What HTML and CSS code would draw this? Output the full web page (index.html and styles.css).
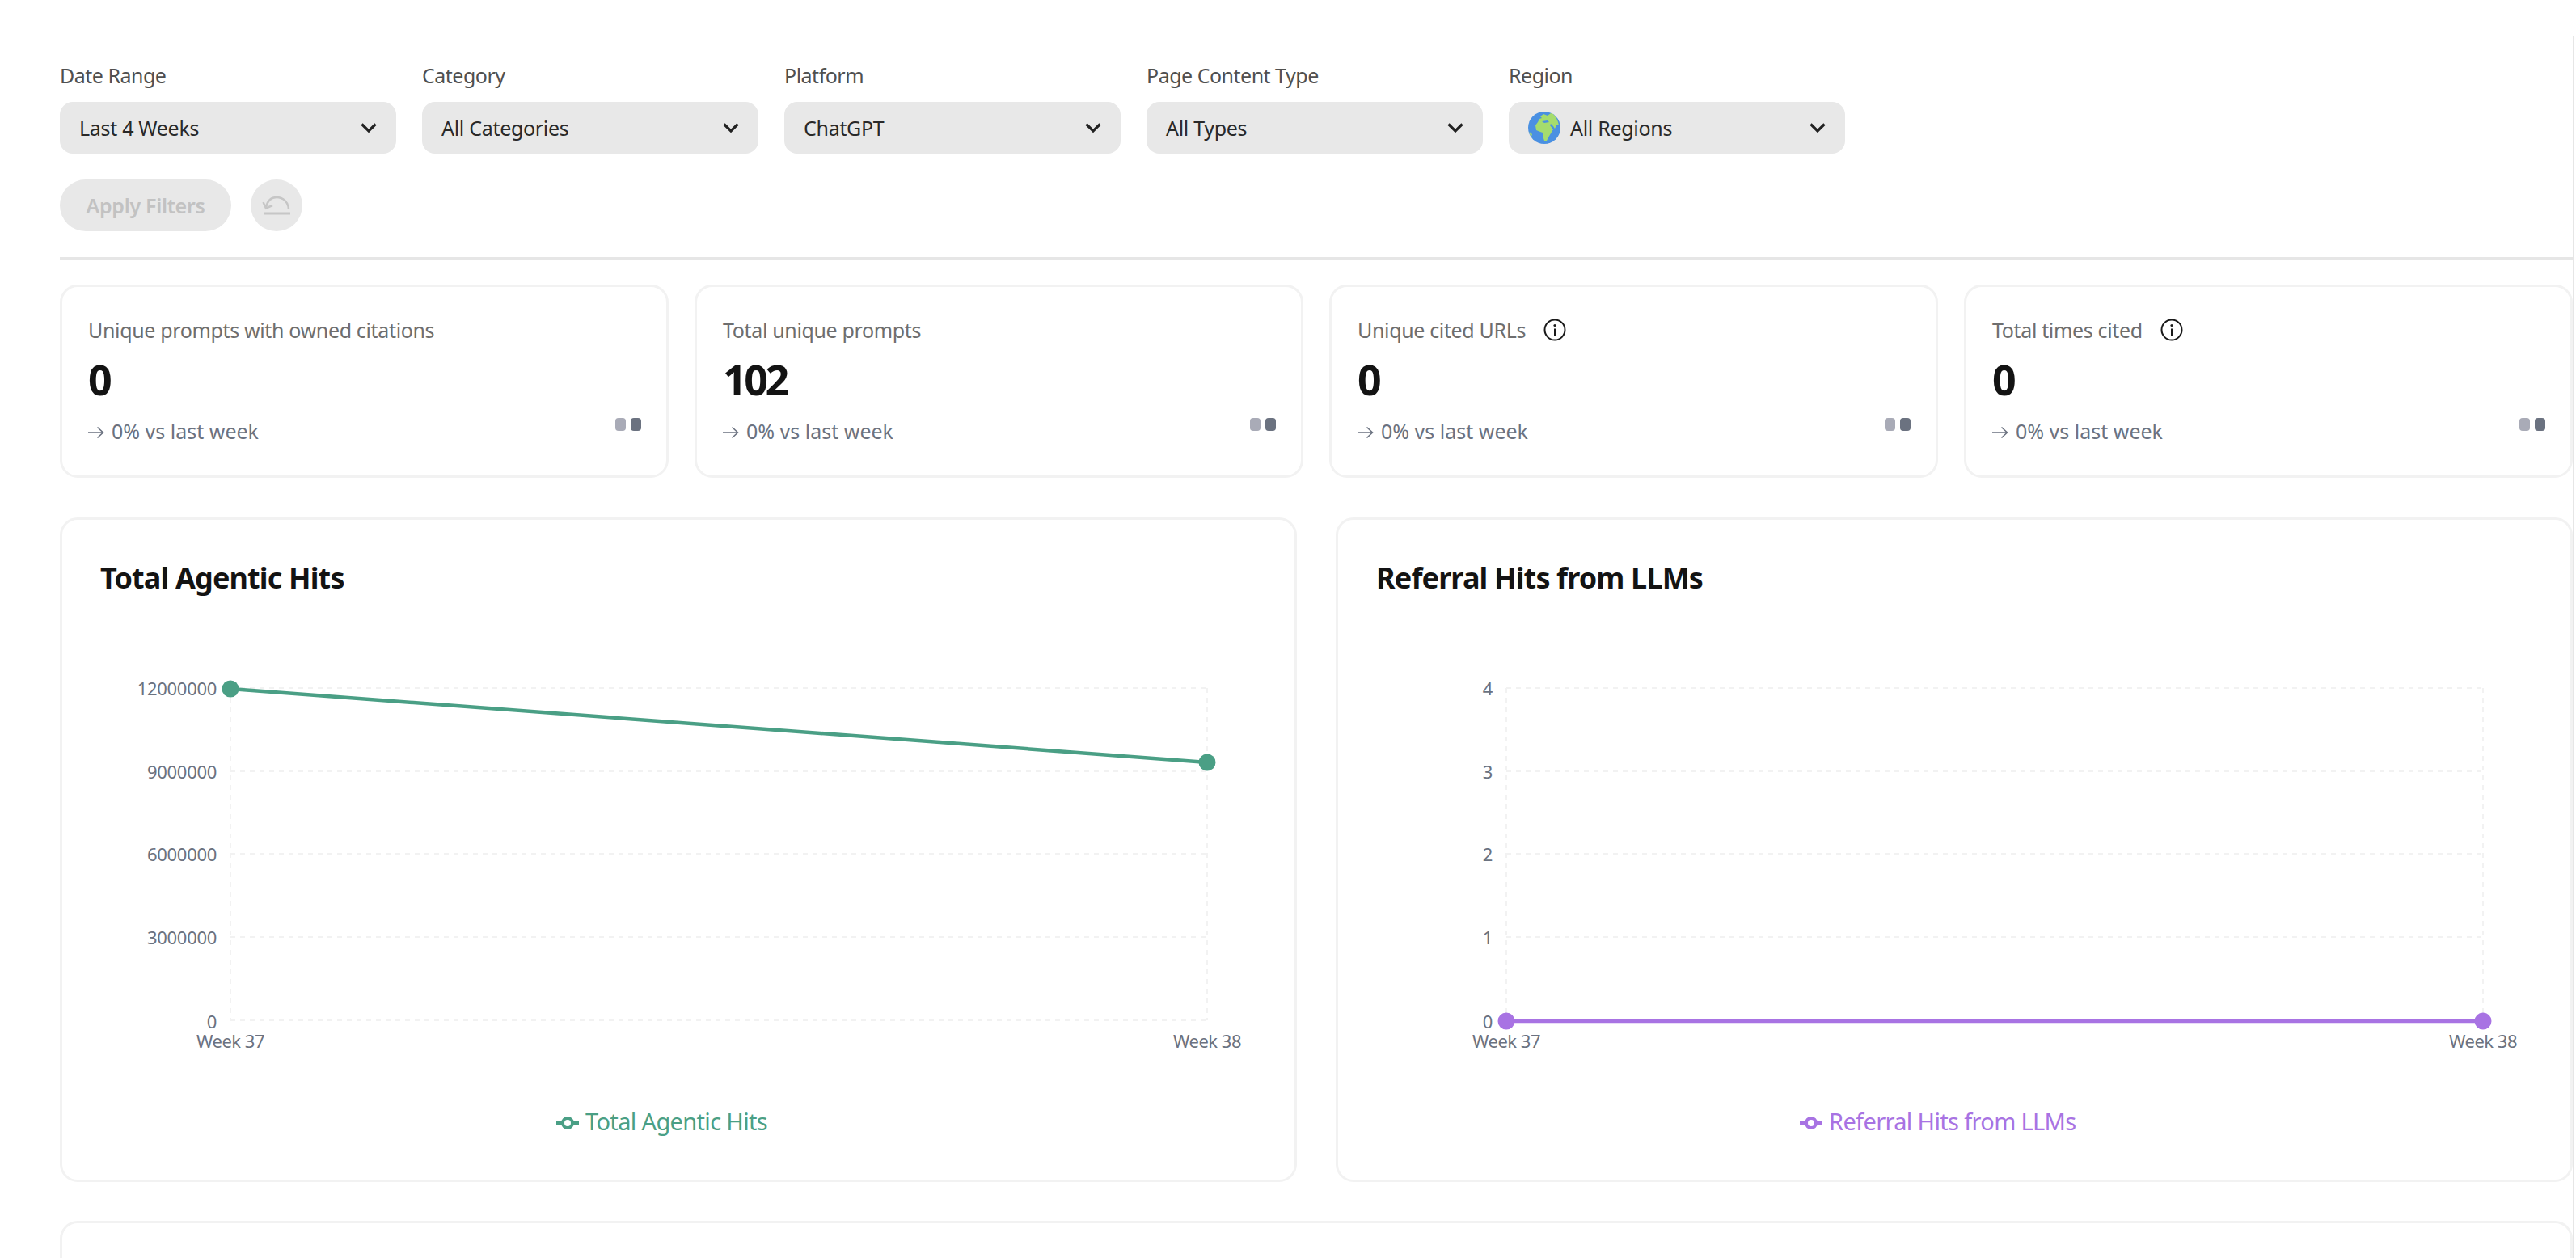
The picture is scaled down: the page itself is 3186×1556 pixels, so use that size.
FILE: index.html
```html
<!DOCTYPE html>
<html lang="en">
<head>
<meta charset="utf-8">
<title>Dashboard</title>
<link rel="stylesheet" href="styles.css">
</head>
<body>
<main class="page">
  <section class="filters">
    <div class="field"><label class="field-label">Date Range</label><div class="select"><span class="select-text">Last 4 Weeks</span><svg class="chev" viewBox="0 0 20 12"><path d="M1.5 1.5 10 10l8.5-8.5"/></svg></div></div>
    <div class="field"><label class="field-label">Category</label><div class="select"><span class="select-text">All Categories</span><svg class="chev" viewBox="0 0 20 12"><path d="M1.5 1.5 10 10l8.5-8.5"/></svg></div></div>
    <div class="field"><label class="field-label">Platform</label><div class="select"><span class="select-text">ChatGPT</span><svg class="chev" viewBox="0 0 20 12"><path d="M1.5 1.5 10 10l8.5-8.5"/></svg></div></div>
    <div class="field"><label class="field-label">Page Content Type</label><div class="select"><span class="select-text">All Types</span><svg class="chev" viewBox="0 0 20 12"><path d="M1.5 1.5 10 10l8.5-8.5"/></svg></div></div>
    <div class="field"><label class="field-label">Region</label><div class="select"><span class="select-with-icon"><svg class="globe" viewBox="0 0 40 40"><circle cx="20" cy="20" r="20" fill="#4a90e2"/><path fill="#a5dc6d" d="M12 13l2-4 3-1-2-2 4-3 5 2 4-3 3 1 4 5 2 5 1 4-3 0-2 4-2-3-3-3-1 2 4 5-3 5-3 5-2 4h-3l-2-6v-4l-3-1-5-2-1-6z"/><path fill="#4a90e2" d="M17 12l7-1 2 2-6 1z"/><path fill="#a5dc6d" d="M1.500 25l3.500 3-1 3-1.500-2z"/></svg><span class="select-text">All Regions</span></span><svg class="chev" viewBox="0 0 20 12"><path d="M1.5 1.5 10 10l8.5-8.5"/></svg></div></div>
  </section>
  <div class="actions">
    <button class="apply" disabled>Apply Filters</button>
    <button class="reset" disabled aria-label="Reset"><svg class="reset-icon" viewBox="0 0 36 26"><path class="reset-stroke" d="M33 18C33 9 26 3 18 3 12 3 7 7 5 15"/><path class="reset-stroke" d="M1.500 9l3.500 7.500 8-3.500"/><path class="reset-base" d="M3 23h32"/></svg></button>
  </div>
  <hr class="divider">
  <section class="stats">
    <article class="stat">
      <div class="stat-label">Unique prompts with owned citations</div>
      <div class="stat-value">0</div>
      <div class="stat-foot"><span class="stat-delta"><svg class="delta-arrow" viewBox="0 0 20 16"><path d="M0 8h18M11.500 1.500 18.500 8l-7 6.500"/></svg>0% vs last week</span><span class="bars"><i class="bar bar-light"></i><i class="bar bar-dark"></i></span></div>
    </article>
    <article class="stat">
      <div class="stat-label">Total unique prompts</div>
      <div class="stat-value">102</div>
      <div class="stat-foot"><span class="stat-delta"><svg class="delta-arrow" viewBox="0 0 20 16"><path d="M0 8h18M11.500 1.500 18.500 8l-7 6.500"/></svg>0% vs last week</span><span class="bars"><i class="bar bar-light"></i><i class="bar bar-dark"></i></span></div>
    </article>
    <article class="stat">
      <div class="stat-label">Unique cited URLs<svg class="info" viewBox="0 0 28 28"><circle cx="14" cy="14" r="12.500"/><path d="M14 12.500V21"/><circle class="info-dot" cx="14" cy="8.500" r="1.600"/></svg></div>
      <div class="stat-value">0</div>
      <div class="stat-foot"><span class="stat-delta"><svg class="delta-arrow" viewBox="0 0 20 16"><path d="M0 8h18M11.500 1.500 18.500 8l-7 6.500"/></svg>0% vs last week</span><span class="bars"><i class="bar bar-light"></i><i class="bar bar-dark"></i></span></div>
    </article>
    <article class="stat">
      <div class="stat-label">Total times cited<svg class="info" viewBox="0 0 28 28"><circle cx="14" cy="14" r="12.500"/><path d="M14 12.500V21"/><circle class="info-dot" cx="14" cy="8.500" r="1.600"/></svg></div>
      <div class="stat-value">0</div>
      <div class="stat-foot"><span class="stat-delta"><svg class="delta-arrow" viewBox="0 0 20 16"><path d="M0 8h18M11.500 1.500 18.500 8l-7 6.500"/></svg>0% vs last week</span><span class="bars"><i class="bar bar-light"></i><i class="bar bar-dark"></i></span></div>
    </article>
  </section>
  <section class="charts">
    <article class="chart-card">
      <h2 class="chart-title">Total Agentic Hits</h2>
      <svg class="chart" viewBox="77 737 1524 722">
        <g class="grid">
          <path d="M285 851H1493M285 954H1493M285 1056H1493M285 1159H1493M285 1262H1493M285 851V1262M1493 851V1262"/>
        </g>
        <g class="ticks">
          <text class="tick-y" x="268" y="860">12000000</text>
          <text class="tick-y" x="268" y="963">9000000</text>
          <text class="tick-y" x="268" y="1065">6000000</text>
          <text class="tick-y" x="268" y="1168">3000000</text>
          <text class="tick-y" x="268" y="1272">0</text>
          <text class="tick-x" x="285" y="1296">Week 37</text>
          <text class="tick-x" x="1493" y="1296">Week 38</text>
        </g>
        <path class="line line-green" d="M285 852L1493 943"/>
        <circle class="dot-green" cx="285" cy="852" r="10.500"/>
        <circle class="dot-green" cx="1493" cy="943" r="10.500"/>
        <path class="line line-green" d="M688 1389H716"/>
        <circle class="legend-dot-green" cx="702" cy="1389" r="6"/>
        <text class="legend-text legend-green" x="724" y="1398">Total Agentic Hits</text>
      </svg>
    </article>
    <article class="chart-card">
      <h2 class="chart-title">Referral Hits from LLMs</h2>
      <svg class="chart" viewBox="1655 737 1524 722">
        <g class="grid">
          <path d="M1863 851H3071M1863 954H3071M1863 1056H3071M1863 1159H3071M1863 1262H3071M1863 851V1262M3071 851V1262"/>
        </g>
        <g class="ticks">
          <text class="tick-y" x="1846" y="860">4</text>
          <text class="tick-y" x="1846" y="963">3</text>
          <text class="tick-y" x="1846" y="1065">2</text>
          <text class="tick-y" x="1846" y="1168">1</text>
          <text class="tick-y" x="1846" y="1272">0</text>
          <text class="tick-x" x="1863" y="1296">Week 37</text>
          <text class="tick-x" x="3071" y="1296">Week 38</text>
        </g>
        <path class="line line-purple" d="M1863 1263H3071"/>
        <circle class="dot-purple" cx="1863" cy="1263" r="10.500"/>
        <circle class="dot-purple" cx="3071" cy="1263" r="10.500"/>
        <path class="line line-purple" d="M2226 1389H2254"/>
        <circle class="legend-dot-purple" cx="2240" cy="1389" r="6"/>
        <text class="legend-text legend-purple" x="2262" y="1398">Referral Hits from LLMs</text>
      </svg>
    </article>
  </section>
  <section class="table-card"></section>
</main>
</body>
</html>
```
FILE: styles.css
```css
* { box-sizing: border-box; }
html, body { margin: 0; height: 100%; overflow: hidden; background: #fff; }
body { font-family: "Noto Sans", sans-serif; }
.page {
  width: 3184px;
  height: 1512px;
  margin-top: 44px;
  padding: 31px 0 0 74px;
  border-right: 2px solid #e6e6e6;
  overflow: hidden;
}
.filters { display: flex; gap: 32px; }
.field { width: 416px; display: flex; flex-direction: column; gap: 15px; }
.field-label { font-size: 25px; line-height: 36px; color: #505050; letter-spacing: -0.5px; }
.select {
  height: 64px;
  padding: 0 24px;
  background: #e8e8e8;
  border-radius: 16px;
  display: flex;
  align-items: center;
  justify-content: space-between;
}
.select-text { font-size: 25px; color: #292929; letter-spacing: -0.3px; }
.select-with-icon { display: flex; align-items: center; gap: 12px; }
.globe { width: 40px; height: 40px; display: block; }
.chev { width: 20px; height: 12px; flex: none; }
.chev path { fill: none; stroke: #222; stroke-width: 3.2; }
.actions { display: flex; gap: 24px; margin-top: 32px; }
.apply {
  width: 212px;
  height: 64px;
  border: 0;
  padding: 0;
  border-radius: 32px;
  background: #e8e8e8;
  color: #c2c2c2;
  font: 600 25px "Noto Sans", sans-serif;
  letter-spacing: -0.3px;
}
.reset {
  width: 64px;
  height: 64px;
  border: 0;
  padding: 0;
  border-radius: 50%;
  background: #e8e8e8;
  display: flex;
  align-items: center;
  justify-content: center;
}
.reset-icon { width: 36px; height: 26px; }
.reset-stroke { fill: none; stroke: #c6c6c6; stroke-width: 2.500; }
.reset-base { fill: none; stroke: #c6c6c6; stroke-width: 3; }
.divider { height: 3px; margin: 32px 0 31px; border: 0; background: #e6e6e6; }
.stats { display: grid; grid-template-columns: repeat(4, 1fr); gap: 32px; }
.stat {
  height: 239px;
  padding: 35px 31px 0 32px;
  border: 3px solid #f2f2f2;
  border-radius: 22px;
}
.stat-label { font-size: 25px; line-height: 36px; color: #6e6e6e; letter-spacing: -0.35px; display: flex; align-items: center; }
.info { width: 28px; height: 28px; margin-left: 22px; }
.info circle { fill: none; stroke: #1a1a1a; stroke-width: 2; }
.info path { stroke: #1a1a1a; stroke-width: 2; }
.info .info-dot { fill: #1a1a1a; stroke: none; }
.stat-value { font-size: 52px; line-height: 60px; font-weight: 700; color: #131313; margin-top: 13px; letter-spacing: -3.5px; }
.stat-foot { display: flex; justify-content: space-between; align-items: flex-start; margin-top: 16px; }
.stat-delta { font-size: 25px; line-height: 36px; color: #6b7280; letter-spacing: 0; display: flex; align-items: center; gap: 9px; }
.delta-arrow { width: 20px; height: 16px; margin-top: 3px; }
.delta-arrow path { fill: none; stroke: #6b7280; stroke-width: 1.600; }
.bars { display: flex; gap: 6px; margin-top: 2px; }
.bar { display: block; width: 13px; height: 16px; border-radius: 4px; }
.bar-light { background: #a9abb7; }
.bar-dark { background: #6b7280; }
.charts { display: grid; grid-template-columns: repeat(2, 1fr); gap: 48px; margin-top: 49px; }
.chart-card { height: 822px; border: 3px solid #f2f2f2; border-radius: 22px; padding-top: 50px; }
.chart-title { margin: 0 0 0 47px; font-size: 36px; line-height: 44px; font-weight: 700; color: #131313; letter-spacing: -0.85px; }
.chart { display: block; width: 1524px; height: 722px; }
.grid path { fill: none; stroke: #f2f2f2; stroke-width: 2; stroke-dasharray: 6 6; }
.tick-y, .tick-x { font-size: 22px; fill: #6b7280; letter-spacing: -0.3px; }
.tick-x { text-anchor: middle; letter-spacing: -0.5px; }
.tick-y { text-anchor: end; }
.line { fill: none; stroke-width: 4.500; }
.line-green { stroke: #4a9f85; }
.line-purple { stroke: #a873e3; }
.dot-green { fill: #4a9f85; }
.dot-purple { fill: #a873e3; }
.legend-dot-green { fill: #fff; stroke: #4a9f85; stroke-width: 4; }
.legend-dot-purple { fill: #fff; stroke: #a873e3; stroke-width: 4; }
.legend-text { font-size: 29px; letter-spacing: -0.65px; }
.legend-green { fill: #4a9f85; }
.legend-purple { fill: #a873e3; }
.table-card { height: 200px; margin-top: 48px; border: 3px solid #f2f2f2; border-radius: 22px; }
```
